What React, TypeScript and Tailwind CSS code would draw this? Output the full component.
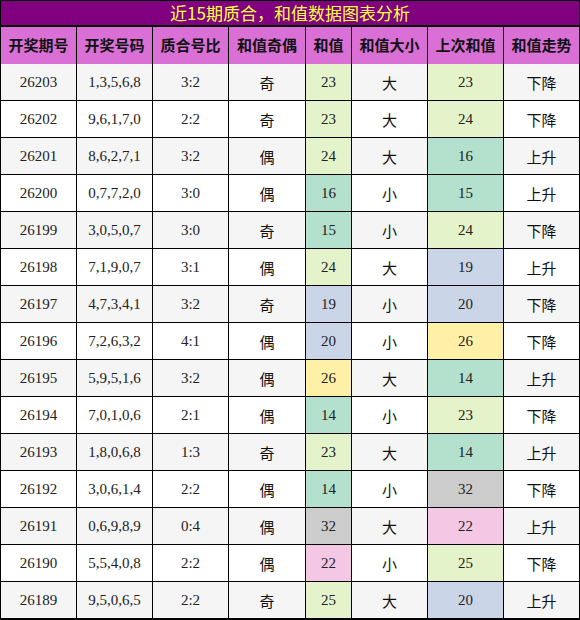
import React from "react";

const rows: [string, string, string, string, number, string, number, string][] = [
  ["26203", "1,3,5,6,8", "3:2", "奇", 23, "大", 23, "下降"],
  ["26202", "9,6,1,7,0", "2:2", "奇", 23, "大", 24, "下降"],
  ["26201", "8,6,2,7,1", "3:2", "偶", 24, "大", 16, "上升"],
  ["26200", "0,7,7,2,0", "3:0", "偶", 16, "小", 15, "上升"],
  ["26199", "3,0,5,0,7", "3:0", "奇", 15, "小", 24, "下降"],
  ["26198", "7,1,9,0,7", "3:1", "偶", 24, "大", 19, "上升"],
  ["26197", "4,7,3,4,1", "3:2", "奇", 19, "小", 20, "下降"],
  ["26196", "7,2,6,3,2", "4:1", "偶", 20, "小", 26, "下降"],
  ["26195", "5,9,5,1,6", "3:2", "偶", 26, "大", 14, "上升"],
  ["26194", "7,0,1,0,6", "2:1", "偶", 14, "小", 23, "下降"],
  ["26193", "1,8,0,6,8", "1:3", "奇", 23, "大", 14, "上升"],
  ["26192", "3,0,6,1,4", "2:2", "偶", 14, "小", 32, "下降"],
  ["26191", "0,6,9,8,9", "0:4", "偶", 32, "大", 22, "上升"],
  ["26190", "5,5,4,0,8", "2:2", "偶", 22, "小", 25, "下降"],
  ["26189", "9,5,0,6,5", "2:2", "奇", 25, "大", 20, "上升"],
];

function sumBg(v: number): string {
  if (v >= 23 && v <= 25) return "bg-[#e4f3c9]";
  if (v >= 14 && v <= 16) return "bg-[#b3e1cd]";
  if (v === 19 || v === 20) return "bg-[#cbd5e8]";
  if (v === 26) return "bg-[#fff0a8]";
  if (v === 32) return "bg-[#cccccc]";
  if (v === 22) return "bg-[#f4c8e4]";
  return "";
}

const serif = "font-['Liberation_Serif','Times_New_Roman',serif]";
const cjk = "font-['Noto_Sans_CJK_SC','Noto_Sans',sans-serif]";

const headers = ["开奖期号", "开奖号码", "质合号比", "和值奇偶", "和值", "和值大小", "上次和值", "和值走势"];

export default function App() {
  return (
    <div className="w-[580px] h-[620px] bg-black p-px flex flex-col">
      <div className={`h-[24px] bg-[#800080] text-[#ffff40] text-[17px] leading-[24px] text-center ${cjk}`}>
        近15期质合，和值数据图表分析
      </div>
      <div className="h-[2px]" />
      <div className="grid grid-cols-[75px_75px_75px_76px_45px_75px_75px_75px] auto-rows-[36px] gap-px">
        {headers.map((h) => (
          <div
            key={h}
            className={`h-[37px] bg-[#da70d6] flex items-center justify-center text-[15px] font-bold text-[#111] ${cjk}`}
          >
            {h}
          </div>
        ))}
        {rows.map((r, i) => {
          const rowBg = i % 2 === 0 ? "bg-[#f5f5f5]" : "bg-white";
          const num = `flex items-center justify-center text-[15px] text-[#222] ${serif}`;
          const zh = `flex items-center justify-center pt-[3px] text-[15px] text-[#111] ${cjk}`;
          return (
            <React.Fragment key={r[0]}>
              <div className={`${num} ${rowBg}`}>{r[0]}</div>
              <div className={`${num} ${rowBg}`}>{r[1]}</div>
              <div className={`${num} ${rowBg}`}>{r[2]}</div>
              <div className={`${zh} ${rowBg}`}>{r[3]}</div>
              <div className={`${num} ${sumBg(r[4])}`}>{r[4]}</div>
              <div className={`${zh} ${rowBg}`}>{r[5]}</div>
              <div className={`${num} ${sumBg(r[6])}`}>{r[6]}</div>
              <div className={`${zh} ${rowBg}`}>{r[7]}</div>
            </React.Fragment>
          );
        })}
      </div>
    </div>
  );
}
